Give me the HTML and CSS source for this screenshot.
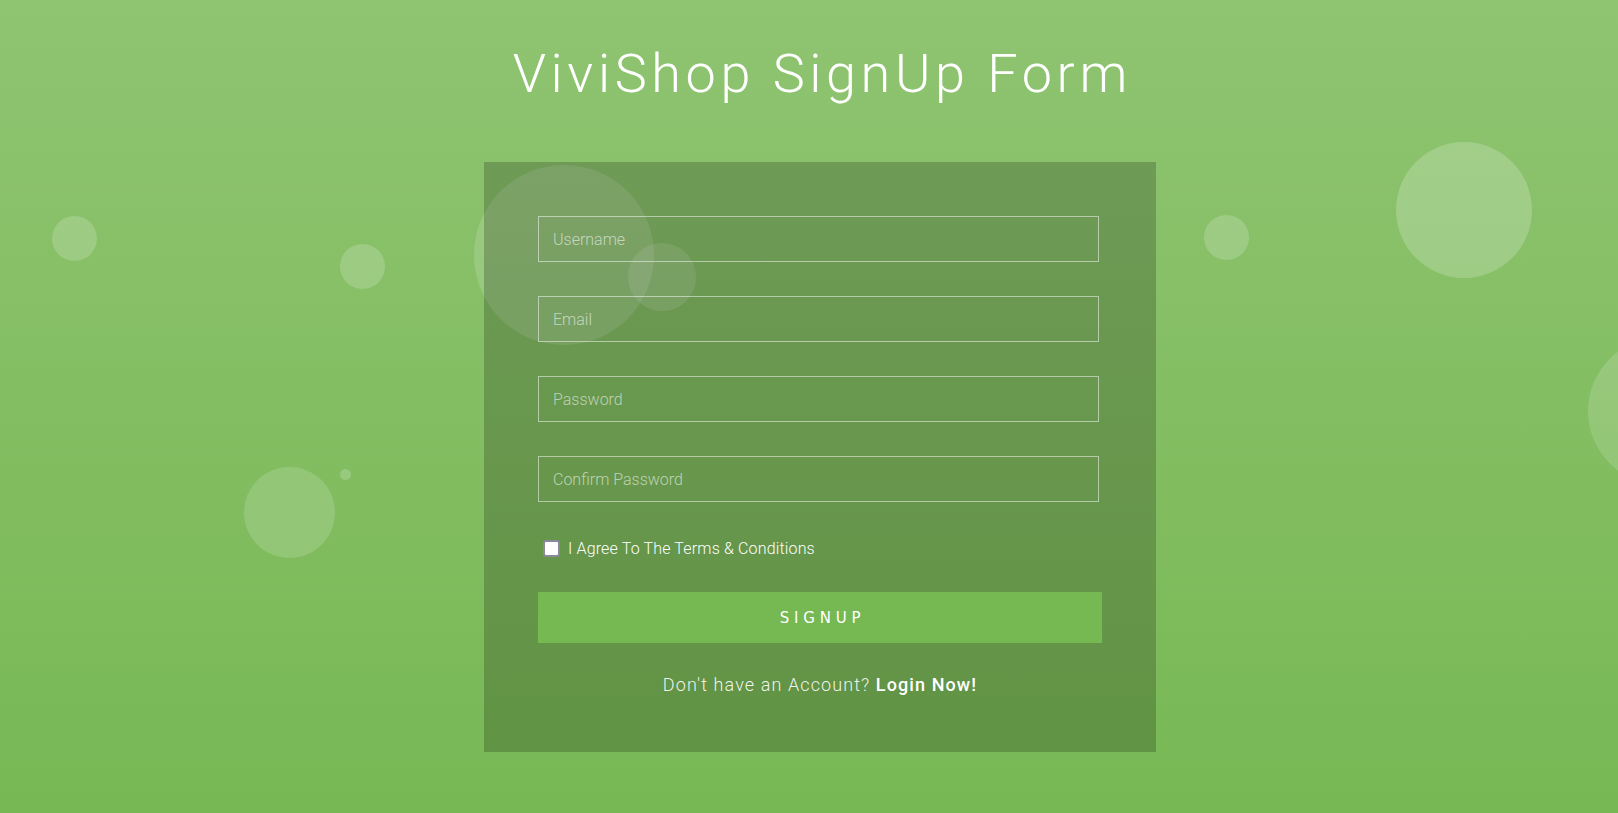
FILE: index.html
```html
<!DOCTYPE html>
<html lang="en">
<head>
<meta charset="utf-8">
<title>ViviShop SignUp Form</title>
<link rel="stylesheet" href="styles.css">
</head>
<body>
<div class="bubbles" aria-hidden="true">
  <span class="bubble b-a"></span>
  <span class="bubble b-b"></span>
  <span class="bubble b-c"></span>
  <span class="bubble b-dot"></span>
  <span class="bubble b-d"></span>
  <span class="bubble b-e"></span>
  <span class="bubble b-f"></span>
  <span class="bubble b-g"></span>
  <span class="bubble b-h"></span>
</div>
<main class="page">
  <h1 class="title">ViviShop SignUp Form</h1>
  <form class="card">
    <input class="field" type="text" placeholder="Username">
    <input class="field" type="email" placeholder="Email">
    <input class="field" type="password" placeholder="Password">
    <input class="field" type="password" placeholder="Confirm Password">
    <label class="agree"><input class="check" type="checkbox"><span>I Agree To The Terms &amp; Conditions</span></label>
    <button class="submit" type="button">SIGNUP</button>
    <p class="note">Don't have an Account? <a class="login" href="#">Login Now!</a></p>
  </form>
</main>
</body>
</html>
```
FILE: styles.css
```css
html, body {
  margin: 0;
  padding: 0;
  height: 100%;
}
body {
  background: linear-gradient(to bottom, #8fc471 0%, #78b854 100%);
  font-family: Roboto, "Liberation Sans", sans-serif;
  overflow: hidden;
  position: relative;
  min-height: 813px;
}
.bubbles {
  position: absolute;
  inset: 0;
  z-index: 0;
  overflow: hidden;
}
.bubble {
  position: absolute;
  display: block;
  border-radius: 50%;
  background: rgba(255, 255, 255, 0.18);
}
.b-a { left: 52px; top: 216px; width: 45px; height: 45px; }
.b-b { left: 340px; top: 244px; width: 45px; height: 45px; }
.b-c { left: 244px; top: 467px; width: 91px; height: 91px; background: rgba(255,255,255,0.15); }
.b-dot { left: 340px; top: 469px; width: 11px; height: 11px; }
.b-d { left: 1396px; top: 142px; width: 136px; height: 136px; background: rgba(255,255,255,0.2); }
.b-e { left: 1588px; top: 337px; width: 148px; height: 148px; background: rgba(255,255,255,0.15); }
.b-f { left: 1204px; top: 215px; width: 45px; height: 45px; }
.b-g { left: 474px; top: 165px; width: 180px; height: 180px; background: rgba(255,255,255,0.15); }
.b-h { left: 628px; top: 243px; width: 68px; height: 68px; background: rgba(255,255,255,0.15); }

.page {
  position: relative;
  z-index: 1;
  padding: 42px 0 0 22px;
  display: flex;
  flex-direction: column;
  align-items: center;
}
.title {
  margin: 0;
  font-size: 54px;
  line-height: 64px;
  font-weight: 300;
  letter-spacing: 4.6px;
  color: #fff;
  padding-left: 4.6px;
}
.card {
  margin-top: 56px;
  width: 672px;
  box-sizing: border-box;
  padding: 54px 54px 55px;
  background: rgba(0, 0, 0, 0.2);
  display: flex;
  flex-direction: column;
}
.field {
  width: 561px;
  height: 46px;
  box-sizing: border-box;
  margin: 0 0 34px 0;
  padding: 0 14px;
  background: transparent;
  border: 1px solid rgba(255, 255, 255, 0.5);
  border-radius: 0;
  outline: none;
  font-family: Roboto, "Liberation Sans", sans-serif;
  font-size: 16px;
  font-weight: 300;
  color: #fff;
}
.field::placeholder {
  color: rgba(255, 255, 255, 0.58);
}
.agree {
  display: flex;
  align-items: center;
  height: 22px;
  margin-top: 1px;
  margin-bottom: 33px;
  padding-left: 5px;
  color: #fff;
  font-size: 16px;
  font-weight: 300;
  letter-spacing: 0.16px;
}
.check {
  appearance: none;
  -webkit-appearance: none;
  margin: 0 8px 0 0;
  width: 17px;
  height: 17px;
  box-sizing: border-box;
  background: #fff;
  border: 2px solid #8a8a9a;
  border-radius: 3px;
}
.submit {
  width: 564px;
  height: 51px;
  border: none;
  border-radius: 0;
  background: #76b852;
  color: #fff;
  font-family: "DejaVu Sans", sans-serif;
  font-size: 15px;
  font-weight: 400;
  letter-spacing: 4.8px;
  padding: 0 0 0 5px;
  cursor: pointer;
}
.note {
  margin: 30px 0 0 0;
  line-height: 24px;
  text-align: center;
  font-size: 18px;
  font-weight: 300;
  letter-spacing: 1.1px;
  color: rgba(255, 255, 255, 0.92);
}
.login {
  color: #fff;
  font-weight: 500;
  text-decoration: none;
}
```
